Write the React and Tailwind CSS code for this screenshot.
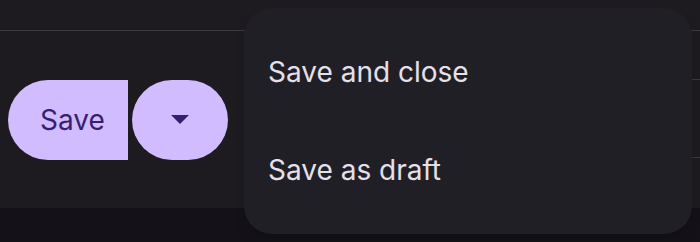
import React from "react";

export default function App() {
    return (
        <div
            className="relative w-[700px] h-[242px] overflow-hidden bg-[#1d1b20] flex flex-col"
            style={{ fontFamily: "Inter, 'Noto Sans', sans-serif" }}
        >
            {/* header strip */}
            <div className="h-[31px] border-b border-[#3b3940]" />

            {/* main content */}
            <div className="h-[177px] flex">
                <div className="flex items-center gap-1 pl-2">
                    <button className="h-20 w-[120px] rounded-l-full bg-[#d0bcff] text-[#381e72] text-[28px] leading-none pl-[9px]">
                        Save
                    </button>
                    <button className="h-20 w-24 rounded-full bg-[#d0bcff] flex items-center justify-center">
                        <svg width="18" height="9" viewBox="0 0 18 9">
                            <path d="M0 0 H18 L9 9 Z" fill="#381e72" />
                        </svg>
                    </button>
                </div>
                <div className="flex-1 flex flex-col ml-4">
                    <div className="h-[49px] border-b border-[#3b3940]" />
                    <div className="h-[78px] border-b border-[#3b3940]" />
                </div>
            </div>

            {/* bottom band */}
            <div className="flex-1 bg-[#141218]" />

            {/* dropdown menu */}
            <div className="absolute left-[244px] top-[8px] w-[448px] rounded-[28px] bg-[#211f26] py-[15px] shadow-lg">
                <div className="h-[98px] flex items-center px-[24px] text-[28px] text-[#e6e0e9]">
                    Save and close
                </div>
                <div className="h-[98px] flex items-center px-[24px] text-[28px] text-[#e6e0e9]">
                    Save as draft
                </div>
            </div>
        </div>
    );
}
